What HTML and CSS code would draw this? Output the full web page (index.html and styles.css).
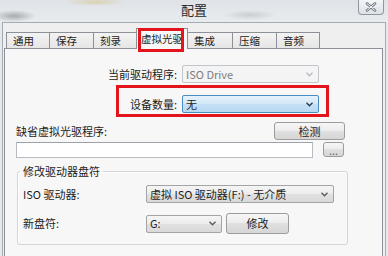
FILE: index.html
```html
<!DOCTYPE html>
<html lang="zh-CN">
<head>
    <meta charset="UTF-8">
    <title>配置</title>
    <link rel="stylesheet" href="styles.css">
</head>
<body>
    <div class="titlebar">
        <span class="title">配置</span>
        <div class="close">
            <svg width="12" height="10" viewBox="0 0 12 10">
                <path d="M2 1.5 L10 8.5 M10 1.5 L2 8.5" stroke="#6f7882" stroke-width="2.6" stroke-linecap="round"/>
                <path d="M2 1.5 L10 8.5 M10 1.5 L2 8.5" stroke="#ffffff" stroke-width="1" stroke-linecap="round"/>
            </svg>
        </div>
    </div>

    <div class="frame">
        <!-- onglets -->
        <div class="tabs">
            <div class="tab" style="width: 44px;">通用</div>
            <div class="tab" style="width: 45px;">保存</div>
            <div class="tab" style="width: 44px;">刻录</div>
            <div class="tab active" style="width: 52px;">虚拟光驱<span class="mark"></span></div>
            <div class="tab" style="width: 46px;">集成</div>
            <div class="tab" style="width: 45px;">压缩</div>
            <div class="tab" style="width: 44px;">音频</div>
        </div>

        <div class="panel">
            <div class="current-row">
                <span class="label">当前驱动程序:</span>
                <div class="combo disabled">
                    <span>ISO Drive</span>
                    <svg class="arrow" width="7" height="5" viewBox="0 0 7 5"><path d="M0.5 0.8 L3.5 3.8 L6.5 0.8" fill="none" stroke="#b9bcc0" stroke-width="1.4"/></svg>
                </div>
            </div>

            <div class="count-box">
                <span class="label">设备数量:</span>
                <div class="combo hot">
                    <span>无</span>
                    <svg class="arrow" width="7" height="5" viewBox="0 0 7 5"><path d="M0.5 0.8 L3.5 3.8 L6.5 0.8" fill="none" stroke="#2d3b4a" stroke-width="1.4"/></svg>
                </div>
            </div>

            <div class="default-row">
                <span>缺省虚拟光驱程序:</span>
                <button class="btn detect">检测</button>
            </div>

            <div class="path-row">
                <input type="text" class="path-input">
                <button class="btn browse">...</button>
            </div>

            <fieldset class="group">
                <legend>修改驱动器盘符</legend>
                <div class="group-row">
                    <span class="label">ISO 驱动器:</span>
                    <div class="combo list wide">
                        <span>虚拟 ISO 驱动器(F:) - 无介质</span>
                        <svg class="arrow" width="7" height="5" viewBox="0 0 7 5"><path d="M0.5 0.8 L3.5 3.8 L6.5 0.8" fill="none" stroke="#555c64" stroke-width="1.4"/></svg>
                    </div>
                </div>
                <div class="group-row second">
                    <span class="label">新盘符:</span>
                    <div class="combo list small">
                        <span>G:</span>
                        <svg class="arrow" width="7" height="5" viewBox="0 0 7 5"><path d="M0.5 0.8 L3.5 3.8 L6.5 0.8" fill="none" stroke="#555c64" stroke-width="1.4"/></svg>
                    </div>
                    <button class="btn change">修改</button>
                </div>
            </fieldset>
        </div>
    </div>
</body>
</html>
```

FILE: styles.css
```css
* {
    box-sizing: border-box;
}

body {
    margin: 0;
    width: 388px;
    height: 256px;
    overflow: hidden;
    font-family: "Noto Sans CJK SC", "Noto Sans", sans-serif;
    font-size: 11px;
    line-height: 15px;
    color: #1c1c1c;
    background: #e6e9ec;
}

/* barre de titre floue */
.titlebar {
    height: 22px;
    display: grid;
    grid-template-columns: 1fr auto 1fr;
    align-items: start;
    background:
        radial-gradient(ellipse 22px 6px at 14px 16px, rgba(90, 95, 100, 0.45), transparent),
        radial-gradient(ellipse 30px 4px at 95px 2px, rgba(210, 190, 120, 0.5), transparent),
        radial-gradient(ellipse 26px 5px at 250px 15px, rgba(120, 125, 130, 0.25), transparent),
        linear-gradient(#dfe3e7, #e8ebee);
}

.title {
    grid-column: 2;
    font-size: 13px;
    line-height: 20px;
    color: #2a2a2a;
}

.close {
    grid-column: 3;
    justify-self: end;
    margin-right: 4px;
    width: 26px;
    height: 15px;
    display: flex;
    align-items: center;
    justify-content: center;
    border: 1px solid #8f98a2;
    border-top: none;
    border-radius: 0 0 4px 4px;
    background: linear-gradient(#f3f5f7, #dde2e7);
}

.frame {
    margin: 0 2px;
    height: 234px;
    border: 1px solid #a3abb3;
    border-bottom: none;
    background: #efefef;
    padding: 5px 2px 0 1px;
}

.tabs {
    display: flex;
    align-items: flex-end;
    height: 21px;
    padding-left: 2px;
    margin-bottom: -1px;
    position: relative;
    z-index: 1;
}

.tab {
    height: 16px;
    margin-bottom: 1px;
    margin-left: -1px;
    padding: 0 6px;
    border: 1px solid #8d9096;
    border-bottom: none;
    background: linear-gradient(#f3f3f3, #e6e6e6);
    font-size: 10.5px;
    line-height: 15px;
    white-space: nowrap;
}

.tab:first-child {
    margin-left: 0;
}

.tab.active {
    position: relative;
    z-index: 2;
    height: 21px;
    margin-bottom: 0;
    padding: 2px 4px 0 4px;
    background: #f7f7f7;
}

/* encadré rouge d'annotation */
.mark {
    position: absolute;
    left: 1px;
    top: -1px;
    width: 46px;
    height: 24px;
    border: 3px solid #e3141c;
}

.panel {
    height: 210px;
    border: 1px solid #8d9096;
    background: #f7f7f7;
}

.current-row {
    display: flex;
    align-items: center;
    height: 18px;
    margin: 16px 0 0 95px;
}

.current-row .label {
    width: 77px;
    margin-right: 5px;
    text-align: right;
}

.count-box {
    display: flex;
    align-items: center;
    width: 213px;
    margin: 2px 0 0 111px;
    padding: 7px 7px 1px 0;
    border: 3px solid #e3141c;
}

.count-box .label {
    width: 58px;
    margin-right: 5px;
    text-align: right;
}

.combo {
    display: flex;
    align-items: center;
    justify-content: space-between;
    width: 137px;
    height: 18px;
    padding: 0 5px 0 3px;
    border: 1px solid #acacac;
    border-radius: 2px;
    white-space: nowrap;
}

.combo.disabled {
    background: #f4f4f4;
    border-color: #c2c5c9;
    color: #7d7d7d;
}

.combo.hot {
    background: linear-gradient(#e6f2fc, #d3e8f8 50%, #c4e0f6 50%, #b9d9f3);
    border-color: #4a8bc2;
}

.combo.list {
    background: linear-gradient(#f5f5f5, #ececec 50%, #e1e1e1 50%, #d9d9d9);
    border-color: #a4a4a4;
}

.combo.wide {
    width: 188px;
}

.combo.small {
    width: 76px;
}

.default-row {
    display: flex;
    align-items: center;
    justify-content: space-between;
    height: 18px;
    margin: 5px 37px 0 11px;
}

.btn {
    height: 18px;
    padding: 0;
    border: 1px solid #9c9c9c;
    border-radius: 3px;
    background: linear-gradient(#f6f6f6, #ececec 50%, #e0e0e0 50%, #d6d6d6);
    font: inherit;
    color: inherit;
}

.btn.detect {
    width: 71px;
}

.path-row {
    display: flex;
    gap: 10px;
    height: 16px;
    margin: 2px 37px 0 11px;
}

.path-input {
    width: 297px;
    height: 16px;
    padding: 0;
    border: 1px solid #b8bcc2;
    border-top-color: #9da2a8;
    background: #fff;
}

.btn.browse {
    width: 21px;
    height: 15px;
    line-height: 10px;
    color: #666;
}

.group {
    width: 331px;
    margin: 6px 0 0 12px;
    padding: 6px 13px 10px 5px;
    border: 1px solid #d0d6db;
    border-radius: 3px;
    box-shadow: inset 1px 1px 0 #fff;
}

.group legend {
    margin-left: -3px;
    padding: 0 3px;
    line-height: 15px;
}

.group-row {
    display: flex;
    align-items: center;
    height: 18px;
}

.group-row .label {
    width: 123px;
}

.group-row.second {
    height: 21px;
    margin-top: 10px;
}

.btn.change {
    width: 63px;
    height: 21px;
    margin-left: 4px;
}
```
